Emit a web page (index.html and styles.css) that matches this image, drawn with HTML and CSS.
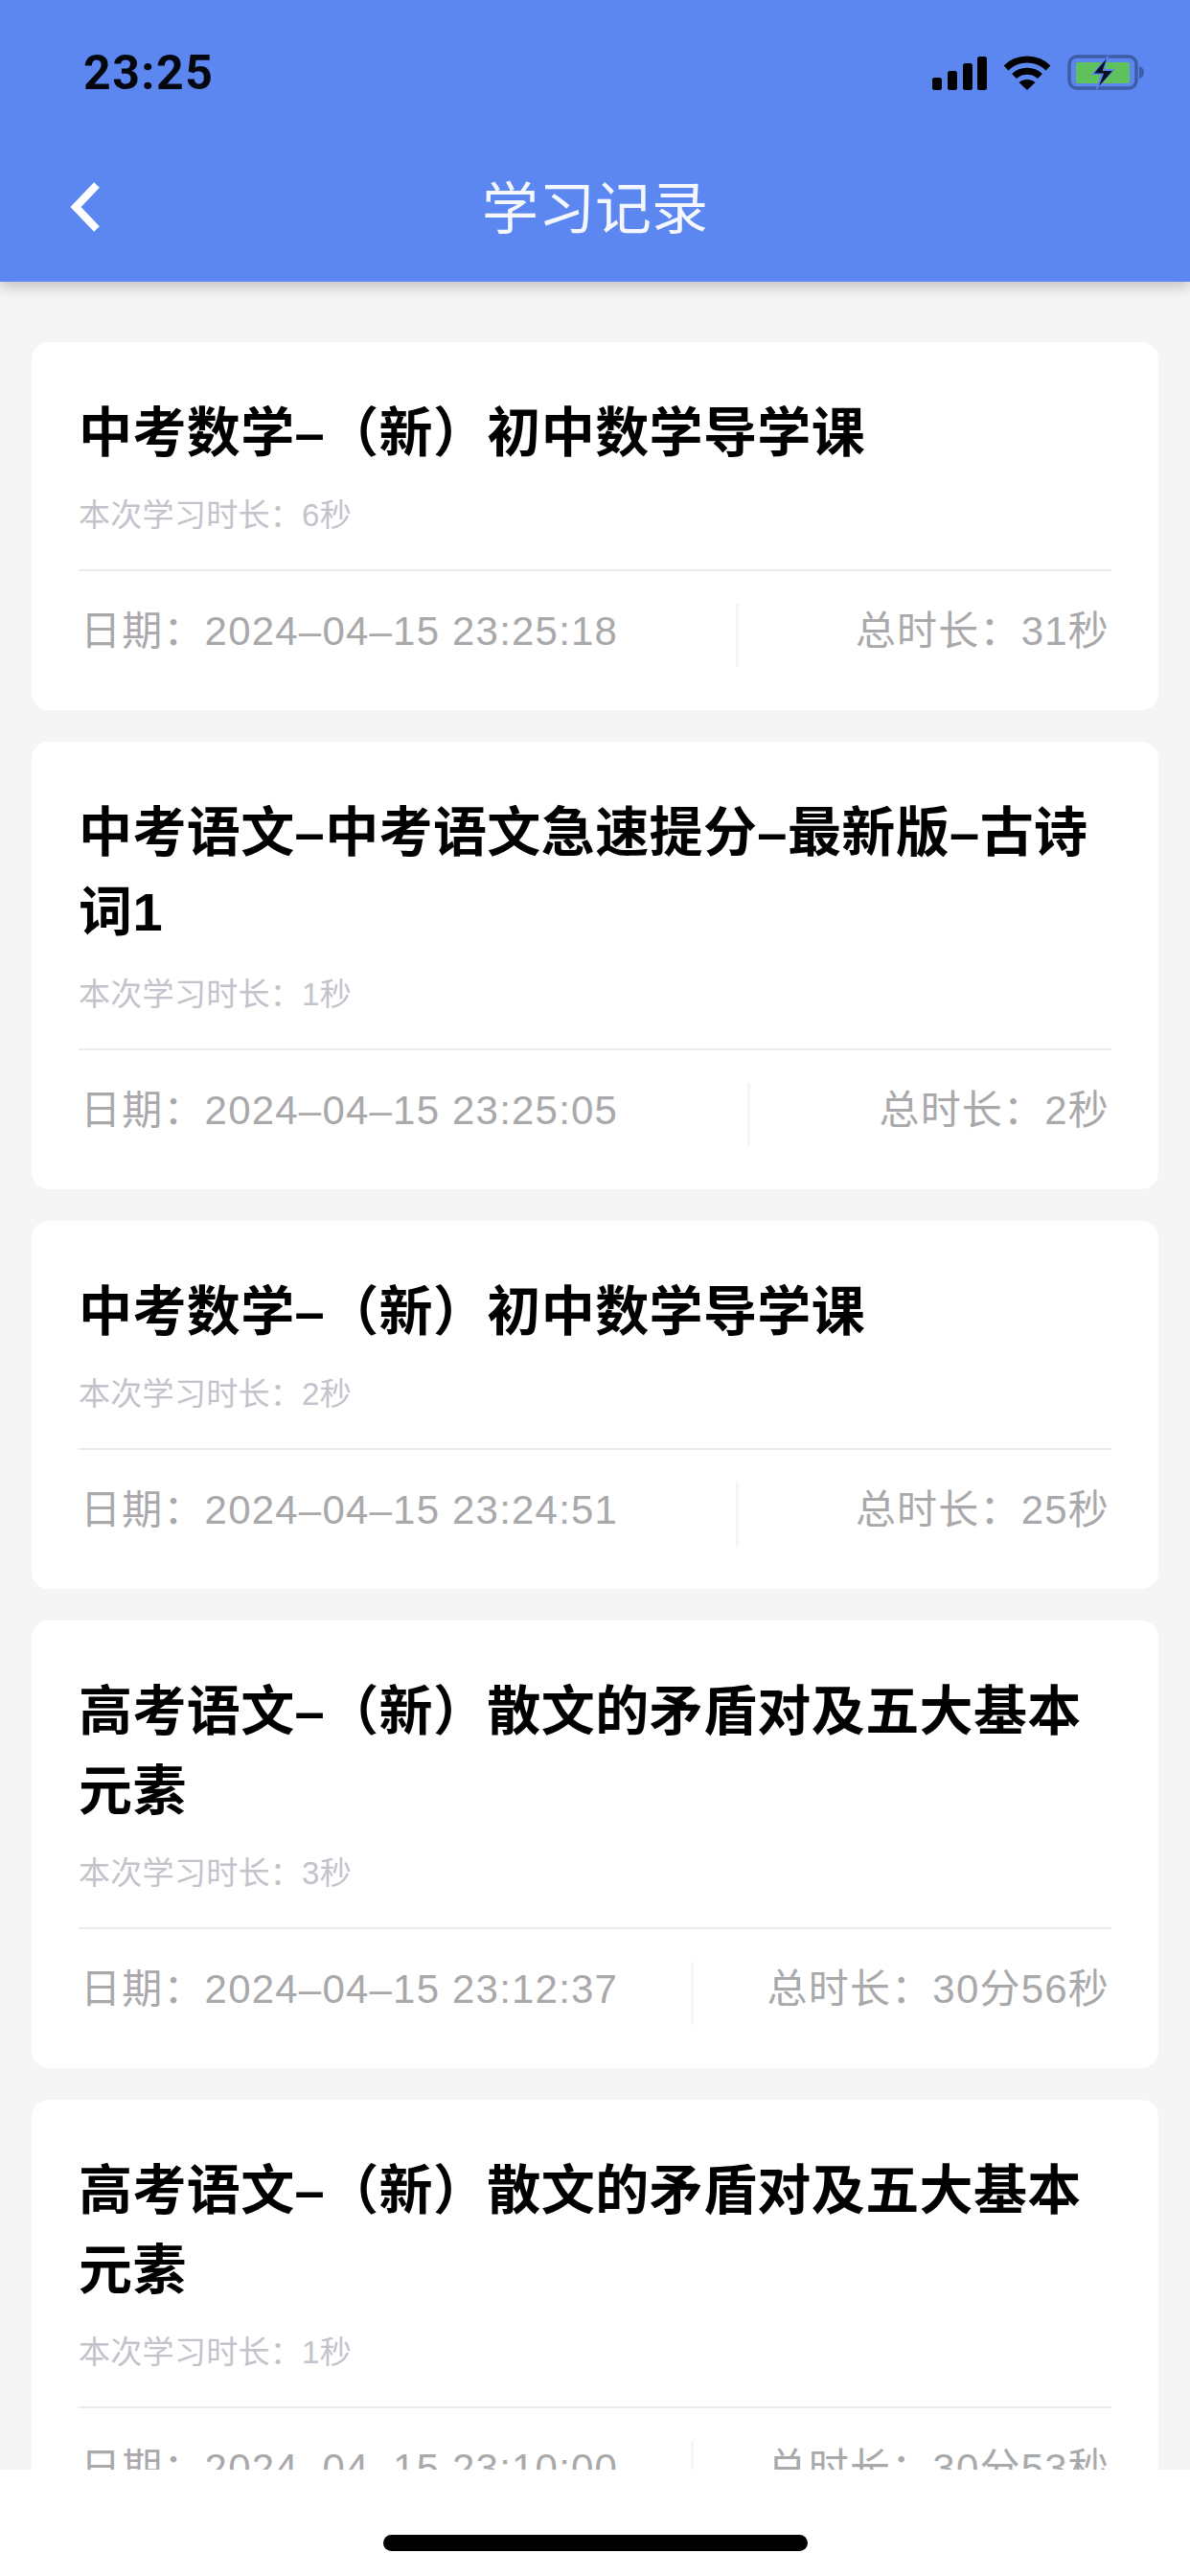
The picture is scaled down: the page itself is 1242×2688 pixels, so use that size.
FILE: index.html
```html
<!DOCTYPE html>
<html lang="zh-CN">
<head>
    <meta charset="utf-8">
    <meta name="viewport" content="width=device-width, initial-scale=1.0">
    <title>学习记录</title>
    <link rel="stylesheet" href="styles.css">
</head>
<body>
    <header class="top">
        <div class="status">
            <span class="clock">23:25</span>
            <div class="status-icons">
                <svg class="signal" width="57" height="35" viewBox="0 0 57 35" fill="#000">
                    <rect x="0" y="22" width="10" height="13" rx="2.5"/>
                    <rect x="16" y="15" width="10" height="20" rx="2.5"/>
                    <rect x="32" y="7" width="10" height="28" rx="2.5"/>
                    <rect x="47" y="0" width="10" height="35" rx="2.5"/>
                </svg>
                <svg class="wifi" width="50" height="36" viewBox="0 0 50 36" fill="none" stroke="#000" stroke-width="7">
                    <path d="M3 13 C15 1 35 1 47 13"/>
                    <path d="M11.5 21.5 C19 14.5 31 14.5 38.5 21.5"/>
                    <path d="M25 36 L16.5 28 C21 24 29 24 33.5 28 Z" fill="#000" stroke="none"/>
                </svg>
                <svg class="battery" width="80" height="38" viewBox="0 0 80 38">
                    <rect x="2" y="2" width="70" height="33" rx="8" fill="none" stroke="#3f5da6" stroke-width="3.5"/>
                    <rect x="9" y="8" width="56" height="22" rx="2" fill="#5fc15c"/>
                    <path d="M75 12 C78 13 80 15 80 18.500 C80 22 78 24 75 25 Z" fill="#3f5da6"/>
                    <path d="M43 0 L25 21 H35 L29 38 L50 15 H39 Z" fill="#5c87f0"/>
                    <path d="M41 4 L28 19.500 H38 L33 33 L47 17 H36.500 Z" fill="#0a0f22"/>
                </svg>
            </div>
        </div>
        <div class="nav">
            <svg class="back" width="34" height="56" viewBox="0 0 34 56" fill="none" stroke="#fff" stroke-width="8">
                <path d="M29 4 L7 27 L29 50"/>
            </svg>
            <h1 class="nav-title">学习记录</h1>
        </div>
    </header>

    <main class="list">
        <section class="card">
            <h2 class="card-title">中考数学–（新）初中数学导学课</h2>
            <p class="card-sub">本次学习时长：6秒</p>
            <div class="card-foot">
                <span>日期：2024–04–15 23:25:18</span>
                <i class="sep"></i>
                <span>总时长：31秒</span>
            </div>
        </section>
        <section class="card">
            <h2 class="card-title">中考语文–中考语文急速提分–最新版–古诗词1</h2>
            <p class="card-sub">本次学习时长：1秒</p>
            <div class="card-foot">
                <span>日期：2024–04–15 23:25:05</span>
                <i class="sep"></i>
                <span>总时长：2秒</span>
            </div>
        </section>
        <section class="card">
            <h2 class="card-title">中考数学–（新）初中数学导学课</h2>
            <p class="card-sub">本次学习时长：2秒</p>
            <div class="card-foot">
                <span>日期：2024–04–15 23:24:51</span>
                <i class="sep"></i>
                <span>总时长：25秒</span>
            </div>
        </section>
        <section class="card">
            <h2 class="card-title">高考语文–（新）散文的矛盾对及五大基本元素</h2>
            <p class="card-sub">本次学习时长：3秒</p>
            <div class="card-foot">
                <span>日期：2024–04–15 23:12:37</span>
                <i class="sep"></i>
                <span>总时长：30分56秒</span>
            </div>
        </section>
        <section class="card">
            <h2 class="card-title">高考语文–（新）散文的矛盾对及五大基本元素</h2>
            <p class="card-sub">本次学习时长：1秒</p>
            <div class="card-foot">
                <span>日期：2024–04–15 23:10:00</span>
                <i class="sep"></i>
                <span>总时长：30分53秒</span>
            </div>
        </section>
    </main>

    <footer class="home">
        <div class="home-bar"></div>
    </footer>
</body>
</html>
```

FILE: styles.css
```css
* {
    box-sizing: border-box;
}

html, body {
    height: 100%;
}

body {
    margin: 0;
    display: flex;
    flex-direction: column;
    height: 2688px;
    overflow: hidden;
    background-color: #f5f5f5;
    font-family: "Liberation Sans", "Noto Sans CJK SC", sans-serif;
}

.top {
    position: relative;
    z-index: 1;
    flex: none;
    height: 294px;
    background-color: #5c87f0;
    box-shadow: 0 5px 14px rgba(0, 0, 0, 0.22);
}

.status {
    display: flex;
    justify-content: space-between;
    align-items: center;
    height: 95px;
    padding: 57px 48px 0 87px;
}

.clock {
    font-family: Roboto, sans-serif;
    font-size: 50px;
    font-weight: 700;
    line-height: 40px;
    letter-spacing: 1.5px;
    color: #05070f;
}

.status-icons {
    display: flex;
    align-items: center;
    gap: 17px;
}

.nav {
    position: relative;
    display: flex;
    justify-content: center;
    align-items: center;
    height: 100px;
    margin-top: 74px;
}

.back {
    position: absolute;
    left: 72px;
    top: 20px;
}

.nav-title {
    margin: 0;
    font-size: 59px;
    font-weight: 400;
    line-height: 100px;
    color: #f4f7ff;
}

.list {
    flex: 1;
    min-height: 0;
    overflow: hidden;
    display: flex;
    flex-direction: column;
    gap: 33px;
    padding: 63px 33px 0;
}

.card {
    flex: none;
    padding: 53px 49px 0;
    background-color: #ffffff;
    border-radius: 18px;
}

.card-title {
    margin: 0;
    font-size: 56px;
    font-weight: 700;
    line-height: 83px;
    letter-spacing: 0.4px;
    color: #000000;
}

.card-sub {
    margin: 22px 0 33px;
    font-size: 33px;
    line-height: 46px;
    letter-spacing: 0.3px;
    color: #c3c3cb;
}

.card-foot {
    display: flex;
    justify-content: space-between;
    align-items: flex-start;
    padding: 26px 2px 45px 2px;
    border-top: 2px solid #ebebed;
    font-size: 42px;
    line-height: 74px;
    letter-spacing: 1.2px;
    color: #a9a9ab;
}

.sep {
    width: 3px;
    height: 66px;
    margin-top: 8px;
    background-color: #f5f5f5;
}

.home {
    position: relative;
    z-index: 1;
    flex: none;
    display: flex;
    justify-content: center;
    height: 111px;
    padding-top: 68px;
    background-color: #ffffff;
}

.home-bar {
    width: 443px;
    height: 17px;
    border-radius: 9px;
    background-color: #000000;
}
```
